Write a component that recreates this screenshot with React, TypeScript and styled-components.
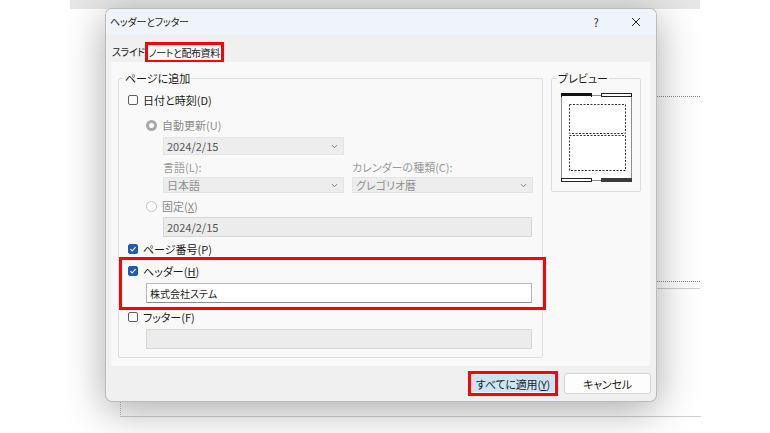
import styled, { createGlobalStyle } from 'styled-components'

const GlobalStyle = createGlobalStyle`
  html, body {
    margin: 0;
    padding: 0;
    background: #ffffff;
  }
  body {
    font-family: "Noto Sans CJK JP", "Noto Sans", sans-serif;
    font-feature-settings: "palt";
    color: #1b1b1b;
  }
`

const Stage = styled.div`
  position: relative;
  width: 770px;
  height: 433px;
  overflow: hidden;
  background: #ffffff;
`

const TopBand = styled.div`
  position: absolute;
  left: 70px;
  top: 0;
  width: 630px;
  height: 9px;
  background: #e6e6e6;
`

const GuideLine = styled.div<{ $top: number; $dotted?: boolean }>`
  position: absolute;
  left: 650px;
  top: ${p => p.$top}px;
  width: 50px;
  border-top: 1px ${p => (p.$dotted ? 'dotted #8a8a8a' : 'solid #cfcfcf')};
`

const SlideEdge = styled.div`
  position: absolute;
  left: 120px;
  top: 396px;
  width: 580px;
  height: 20px;
  border-left: 1px dotted #b8b8b8;
  border-bottom: 1px solid #cfcfcf;
`

const Dialog = styled.div`
  position: absolute;
  left: 105px;
  top: 8px;
  width: 552px;
  height: 394px;
  box-sizing: border-box;
  border: 1px solid rgba(0, 0, 0, 0.22);
  border-radius: 7px;
  overflow: hidden;
  background: #f0f0f0;
  box-shadow: 0 8px 40px rgba(0, 0, 0, 0.34);
  display: flex;
  flex-direction: column;
`

const TitleBar = styled.div`
  height: 25px;
  flex: none;
  display: flex;
  align-items: center;
  background: #eef4f9;
  padding-left: 4px;
`

const TitleText = styled.span`
  flex: 1;
  font-size: 10px;
  letter-spacing: -0.2px;
  color: #1b1b1b;
`

const WindowButton = styled.div`
  width: 40px;
  height: 25px;
  display: flex;
  align-items: center;
  justify-content: center;
  font-size: 11px;
  color: #222;
`

const TabsRow = styled.div`
  height: 28px;
  flex: none;
  display: flex;
  align-items: flex-end;
  padding-left: 6px;
`

const Tab = styled.div<{ $marked?: boolean }>`
  height: ${p => (p.$marked ? '21px' : '20px')};
  box-sizing: border-box;
  display: flex;
  align-items: center;
  padding: 0 ${p => (p.$marked ? '1px' : '0')};
  font-size: 10px;
  letter-spacing: -0.4px;
  color: #1b1b1b;
  border: ${p => (p.$marked ? '3px solid #ff0000' : 'none')};
  background: ${p => (p.$marked ? '#f9f9f9' : 'transparent')};
  margin-bottom: ${p => (p.$marked ? '-1px' : '1px')};
`

const Panel = styled.div`
  height: 304px;
  flex: none;
  margin: 0 6px 0 5px;
  background: #f9f9f9;
  display: flex;
  align-items: flex-start;
  gap: 8px;
  padding: 16px 0 0 7px;
  box-sizing: border-box;
`

const Group = styled.div<{ $width: number }>`
  position: relative;
  width: ${p => p.$width}px;
  box-sizing: border-box;
  border: 1px solid #dedede;
  border-radius: 2px;
  display: flex;
  flex-direction: column;
`

const Legend = styled.span`
  position: absolute;
  left: 5px;
  top: -9px;
  padding: 0 1px;
  background: #f9f9f9;
  font-size: 11px;
  line-height: 16px;
  color: #1b1b1b;
`

const Row = styled.div<{ $top: number; $indent: number; $height?: number; $muted?: boolean }>`
  display: flex;
  align-items: center;
  gap: 5px;
  margin-top: ${p => p.$top}px;
  padding-left: ${p => p.$indent}px;
  height: ${p => p.$height ?? 16}px;
  font-size: 11px;
  color: ${p => (p.$muted ? '#8c8c8c' : '#1b1b1b')};
  white-space: nowrap;
`

const Key = styled.span`
  text-decoration: underline;
  text-underline-offset: 1px;
`

const Box = styled.span<{ $checked?: boolean }>`
  width: 10px;
  height: 10px;
  box-sizing: border-box;
  flex: none;
  border-radius: 2px;
  border: 1px solid ${p => (p.$checked ? '#1a5cb8' : '#5f5f5f')};
  background: ${p => (p.$checked ? '#1a5cb8' : '#ffffff')};
  display: flex;
  align-items: center;
  justify-content: center;
`

const Radio = styled.span<{ $selected?: boolean }>`
  width: 11px;
  height: 11px;
  box-sizing: border-box;
  flex: none;
  border-radius: 50%;
  border: ${p => (p.$selected ? '3px solid #a9a9a9' : '1px solid #c4c4c4')};
  background: #ffffff;
`

const FieldGrid = styled.div<{ $top: number }>`
  display: grid;
  grid-template-columns: 181px 181px;
  column-gap: 8px;
  padding-left: 44px;
  margin-top: ${p => p.$top}px;
`

const Caption = styled.span`
  height: 14px;
  display: flex;
  align-items: center;
  font-size: 11px;
  color: #9a9a9a;
  white-space: nowrap;
`

const Select = styled.div<{ $height: number; $faint?: boolean }>`
  height: ${p => p.$height}px;
  box-sizing: border-box;
  display: flex;
  align-items: center;
  justify-content: space-between;
  padding: 0 5px 0 3px;
  background: #ededed;
  border: 1px solid #e4e4e4;
  font-size: 11px;
  color: ${p => (p.$faint ? '#8f8f8f' : '#555555')};
`

const TextField = styled.div<{ $top: number; $indent: number; $width: number; $enabled?: boolean }>`
  margin-top: ${p => p.$top}px;
  margin-left: ${p => p.$indent}px;
  width: ${p => p.$width}px;
  height: 20px;
  box-sizing: border-box;
  display: flex;
  align-items: center;
  padding-left: 3px;
  font-size: ${p => (p.$enabled ? '10px' : '11px')};
  color: ${p => (p.$enabled ? '#1b1b1b' : '#555555')};
  background: ${p => (p.$enabled ? '#ffffff' : '#ececec')};
  border: 1px solid ${p => (p.$enabled ? '#b8b8b8' : '#d6d6d6')};
  border-bottom-color: ${p => (p.$enabled ? '#8c8c8c' : '#d6d6d6')};
`

const Highlight = styled.div`
  margin: 0 -4px 0 0;
  border: 3px solid #ff0000;
  padding: 3px 0 4px 0;
  display: flex;
  flex-direction: column;
`

const GroupEnd = styled.div`
  height: 8px;
`

const PreviewArt = styled.svg`
  display: block;
  margin: 14px 0 8px 9px;
`

const ButtonRow = styled.div`
  display: flex;
  justify-content: flex-end;
  align-items: center;
  gap: 6px;
  margin-top: 5px;
  padding-right: 5px;
`

const MarkedButton = styled.div`
  width: 90px;
  height: 25px;
  box-sizing: border-box;
  border: 3px solid #ff0000;
  padding: 1px;
  display: flex;
`

const Button = styled.div<{ $primary?: boolean }>`
  flex: ${p => (p.$primary ? '1' : 'none')};
  width: ${p => (p.$primary ? 'auto' : '87px')};
  height: ${p => (p.$primary ? 'auto' : '21px')};
  box-sizing: border-box;
  display: flex;
  align-items: center;
  justify-content: center;
  font-size: 11px;
  letter-spacing: -0.2px;
  color: #1b1b1b;
  background: ${p => (p.$primary ? '#cce4f7' : '#fdfdfd')};
  border: ${p => (p.$primary ? 'none' : '1px solid #d3d3d3')};
  border-radius: ${p => (p.$primary ? '0' : '3px')};
`

const Chevron = () => (
  <svg width="7" height="5" viewBox="0 0 7 5">
    <path d="M1 1.2 L3.5 3.7 L6 1.2" fill="none" stroke="#7a7a7a" strokeWidth="1" />
  </svg>
)

const Check = () => (
  <svg width="8" height="8" viewBox="0 0 8 8">
    <path d="M1.4 4.2 L3.2 5.9 L6.6 2.2" fill="none" stroke="#ffffff" strokeWidth="1.1" />
  </svg>
)

const CloseIcon = () => (
  <svg width="10" height="10" viewBox="0 0 10 10">
    <path d="M1 1 L9 9 M9 1 L1 9" stroke="#222" strokeWidth="1" />
  </svg>
)

const Preview = () => (
  <PreviewArt width="71" height="90" viewBox="0 0 71 90">
    <rect x="0.5" y="2.5" width="70" height="85" fill="#ffffff" stroke="#8d8d8d" />
    <rect x="0" y="0" width="31" height="4" fill="#111" />
    <rect x="1" y="3" width="29" height="1" fill="#ffffff" />
    <rect x="40.5" y="0.5" width="30" height="3" fill="#ffffff" stroke="#222" />
    <rect x="0.5" y="85.5" width="30" height="3" fill="#ffffff" stroke="#222" />
    <rect x="40" y="85" width="31" height="4" fill="#3a3a3a" />
    <rect x="8.5" y="11.5" width="56" height="29" fill="none" stroke="#333" strokeDasharray="2 1.5" />
    <rect x="8.5" y="42.5" width="56" height="35" fill="none" stroke="#333" strokeDasharray="2 1.5" />
  </PreviewArt>
)

export default function App() {
  return (
    <Stage>
      <GlobalStyle />
      <TopBand />
      <GuideLine $top={96} $dotted />
      <GuideLine $top={281} $dotted />
      <GuideLine $top={288} />
      <SlideEdge />
      <Dialog>
        <TitleBar>
          <TitleText>ヘッダーとフッター</TitleText>
          <WindowButton>?</WindowButton>
          <WindowButton>
            <CloseIcon />
          </WindowButton>
        </TitleBar>
        <TabsRow>
          <Tab>スライド</Tab>
          <Tab $marked>ノートと配布資料</Tab>
        </TabsRow>
        <Panel>
          <Group $width={425}>
            <Legend>ページに追加</Legend>
            <Row $top={13} $indent={9}>
              <Box />
              日付と時刻(D)
            </Row>
            <Row $top={9} $indent={27} $muted>
              <Radio $selected />
              自動更新(U)
            </Row>
            <FieldGrid $top={4}>
              <Select $height={18}>
                2024/2/15
                <Chevron />
              </Select>
            </FieldGrid>
            <FieldGrid $top={5}>
              <Caption>言語(L):</Caption>
              <Caption>カレンダーの種類(C):</Caption>
            </FieldGrid>
            <FieldGrid $top={3}>
              <Select $height={16} $faint>
                日本語
                <Chevron />
              </Select>
              <Select $height={16} $faint>
                グレゴリオ暦
                <Chevron />
              </Select>
            </FieldGrid>
            <Row $top={5} $indent={27} $muted>
              <Radio />
              <span>
                固定(<Key>X</Key>)
              </span>
            </Row>
            <TextField $top={3} $indent={44} $width={369}>
              2024/2/15
            </TextField>
            <Row $top={4} $indent={9}>
              <Box $checked>
                <Check />
              </Box>
              ページ番号(P)
            </Row>
            <Highlight>
              <Row $top={0} $indent={6}>
                <Box $checked>
                  <Check />
                </Box>
                <span>
                  ヘッダー(<Key>H</Key>)
                </span>
              </Row>
              <TextField $top={4} $indent={24} $width={386} $enabled>
                株式会社ステム
              </TextField>
            </Highlight>
            <Row $top={0} $indent={9} $height={14}>
              <Box />
              フッター(F)
            </Row>
            <TextField $top={5} $indent={27} $width={386} />
            <GroupEnd />
          </Group>
          <Group $width={90}>
            <Legend>プレビュー</Legend>
            <Preview />
          </Group>
        </Panel>
        <ButtonRow>
          <MarkedButton>
            <Button $primary>
              <span>
                すべてに適用(<Key>Y</Key>)
              </span>
            </Button>
          </MarkedButton>
          <Button>キャンセル</Button>
        </ButtonRow>
      </Dialog>
    </Stage>
  )
}
